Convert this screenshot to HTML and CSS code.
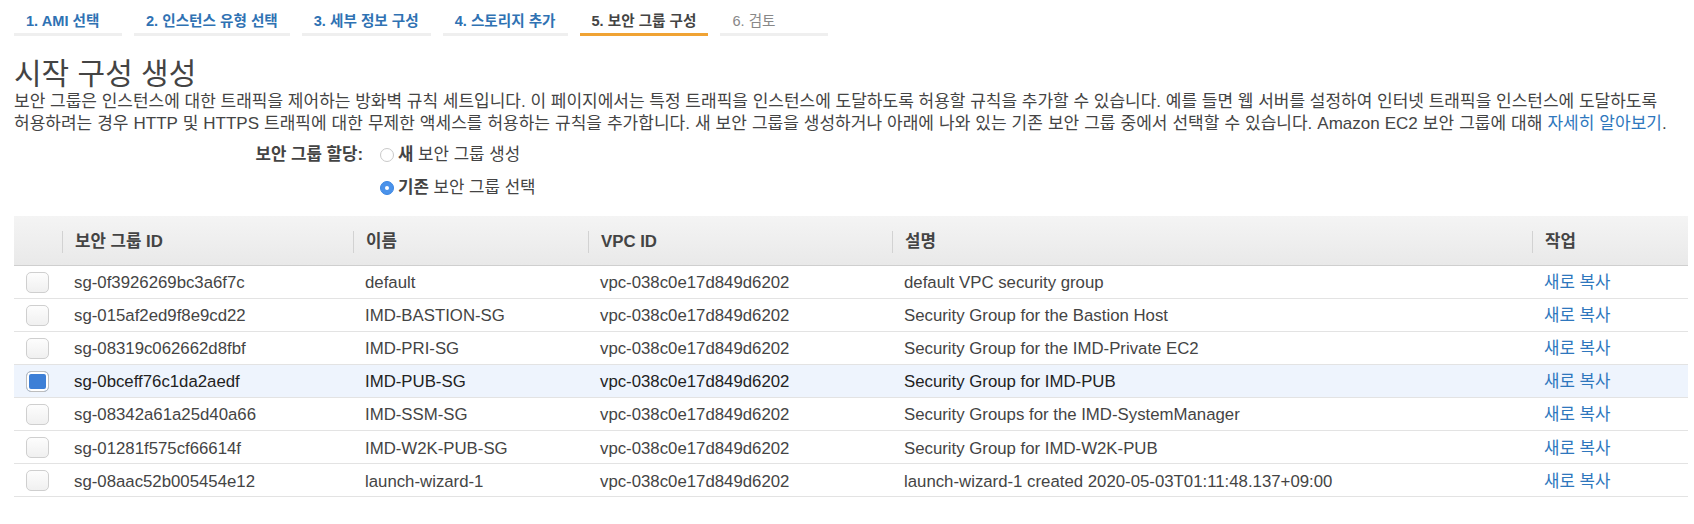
FILE: index.html
```html
<!DOCTYPE html>
<html lang="ko">
<head>
<meta charset="utf-8">
<title>시작 구성 생성</title>
<link rel="stylesheet" href="styles.css">
</head>
<body>
<nav class="tabs">
  <a class="tab">1. AMI 선택</a>
  <a class="tab">2. 인스턴스 유형 선택</a>
  <a class="tab">3. 세부 정보 구성</a>
  <a class="tab">4. 스토리지 추가</a>
  <a class="tab active">5. 보안 그룹 구성</a>
  <a class="tab disabled">6. 검토</a>
</nav>
<main class="content">
  <h1 class="title">시작 구성 생성</h1>
  <p class="desc">보안 그룹은 인스턴스에 대한 트래픽을 제어하는 방화벽 규칙 세트입니다. 이 페이지에서는 특정 트래픽을 인스턴스에 도달하도록 허용할 규칙을 추가할 수 있습니다. 예를 들면 웹 서버를 설정하여 인터넷 트래픽을 인스턴스에 도달하도록<br><span class="line2">허용하려는 경우 HTTP 및 HTTPS 트래픽에 대한 무제한 액세스를 허용하는 규칙을 추가합니다. 새 보안 그룹을 생성하거나 아래에 나와 있는 기존 보안 그룹 중에서 선택할 수 있습니다. Amazon EC2 보안 그룹에 대해 <a class="link">자세히 알아보기</a>.</span></p>
  <div class="assign">
    <div class="assign-label">보안 그룹 할당:</div>
    <div class="assign-options">
      <label class="option"><span class="radio"></span><b>새</b>&nbsp;보안 그룹 생성</label>
      <label class="option"><span class="radio checked"></span><b>기존</b>&nbsp;보안 그룹 선택</label>
    </div>
  </div>
  <table class="grid">
    <colgroup>
      <col class="c-check"><col class="c-id"><col class="c-name"><col class="c-vpc"><col class="c-desc"><col class="c-act">
    </colgroup>
    <thead>
      <tr>
        <th></th>
        <th><span class="th-in">보안 그룹 ID</span></th>
        <th><span class="th-in">이름</span></th>
        <th><span class="th-in">VPC ID</span></th>
        <th><span class="th-in">설명</span></th>
        <th><span class="th-in">작업</span></th>
      </tr>
    </thead>
    <tbody>
      <tr><td><span class="cb"></span></td><td>sg-0f3926269bc3a6f7c</td><td>default</td><td>vpc-038c0e17d849d6202</td><td>default VPC security group</td><td><a class="link">새로 복사</a></td></tr>
      <tr><td><span class="cb"></span></td><td>sg-015af2ed9f8e9cd22</td><td>IMD-BASTION-SG</td><td>vpc-038c0e17d849d6202</td><td>Security Group for the Bastion Host</td><td><a class="link">새로 복사</a></td></tr>
      <tr><td><span class="cb"></span></td><td>sg-08319c062662d8fbf</td><td>IMD-PRI-SG</td><td>vpc-038c0e17d849d6202</td><td>Security Group for the IMD-Private EC2</td><td><a class="link">새로 복사</a></td></tr>
      <tr class="selected"><td><span class="cb on"></span></td><td>sg-0bceff76c1da2aedf</td><td>IMD-PUB-SG</td><td>vpc-038c0e17d849d6202</td><td>Security Group for IMD-PUB</td><td><a class="link">새로 복사</a></td></tr>
      <tr><td><span class="cb"></span></td><td>sg-08342a61a25d40a66</td><td>IMD-SSM-SG</td><td>vpc-038c0e17d849d6202</td><td>Security Groups for the IMD-SystemManager</td><td><a class="link">새로 복사</a></td></tr>
      <tr><td><span class="cb"></span></td><td>sg-01281f575cf66614f</td><td>IMD-W2K-PUB-SG</td><td>vpc-038c0e17d849d6202</td><td>Security Group for IMD-W2K-PUB</td><td><a class="link">새로 복사</a></td></tr>
      <tr><td><span class="cb"></span></td><td>sg-08aac52b005454e12</td><td>launch-wizard-1</td><td>vpc-038c0e17d849d6202</td><td>launch-wizard-1 created 2020-05-03T01:11:48.137+09:00</td><td><a class="link">새로 복사</a></td></tr>
    </tbody>
  </table>
</main>
</body>
</html>
```
FILE: styles.css
```css
* { box-sizing: border-box; }
html, body { margin: 0; background: #fff; }
body {
  font-family: "Liberation Sans", "Noto Sans CJK KR", Arial, sans-serif;
  color: #444;
  font-size: 16.8px;
}
.tabs {
  display: flex;
  gap: 12px;
  padding: 11px 0 0 14px;
}
.tab {
  min-width: 108px;
  padding: 0 12px;
  height: 25px;
  line-height: 20px;
  font-size: 14.6px;
  font-weight: bold;
  color: #2f72b3;
  border-bottom: 3px solid #efefef;
  white-space: nowrap;
}
.tab.active { color: #444; border-bottom-color: #f0a334; }
.tab.disabled { color: #888; font-weight: normal; }
.content { padding: 0 6px 0 14px; }
.title {
  margin: 22px 0 0;
  font-size: 30px;
  font-weight: normal;
  line-height: 32px;
  color: #444;
}
.desc {
  margin: 0;
  padding-top: 1px;
  font-size: 17px;
  line-height: 22px;
  white-space: nowrap;
}
.line2 { word-spacing: 0.3px; }
.link { color: #2e77bd; }
.assign {
  display: flex;
  margin-top: 9px;
}
.assign-label {
  width: 366px;
  text-align: right;
  font-weight: bold;
  line-height: 22px;
  padding-right: 17px;
}
.assign-options { display: flex; flex-direction: column; gap: 11px; }
.option { display: flex; align-items: center; line-height: 22px; }
.radio {
  width: 14px; height: 14px;
  border-radius: 50%;
  border: 1px solid #c9c9c9;
  background: #fff;
  margin-right: 4px;
  display: inline-block;
  position: relative;
}
.radio.checked {
  border-color: #3b86e3;
  background: #4a92ea;
}
.radio.checked::after {
  content: "";
  position: absolute;
  left: 4px; top: 4px;
  width: 4px; height: 4px;
  border-radius: 50%;
  background: #fff;
}
.grid {
  margin-top: 17px;
  width: 100%;
  border-collapse: collapse;
  table-layout: fixed;
}
.c-check { width: 48px; }
.c-id { width: 291px; }
.c-name { width: 235px; }
.c-vpc { width: 304px; }
.c-desc { width: 640px; }
.grid th {
  height: 49px;
  background: linear-gradient(#f4f4f4, #e9e9e9);
  border-bottom: 1px solid #cfcfcf;
  text-align: left;
  font-weight: bold;
  padding: 3px 0 0;
  color: #444;
}
.th-in {
  display: block;
  border-left: 1px solid #d2d2d2;
  padding-left: 12px;
  line-height: 22px;
}
.grid td {
  height: 33.1px;
  padding: 3px 0 0 12px;
  border-bottom: 1px solid #e3e3e3;
  white-space: nowrap;
  line-height: 20px;
}
.grid tr.selected td { background: #eef4fd; color: #222; }
.cb {
  display: block;
  width: 23px; height: 21px;
  margin-top: -2px;
  border: 1px solid #cfcfcf;
  border-radius: 5px;
  background: linear-gradient(#fdfdfd, #f0f0f0);
}
.cb.on {
  background: #3d7fd6;
  border-color: #bdbdbd;
  box-shadow: inset 0 0 0 2px #fff;
}
```
